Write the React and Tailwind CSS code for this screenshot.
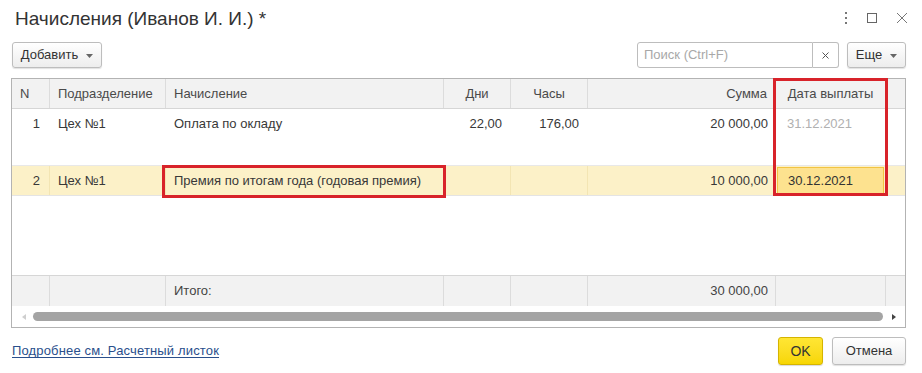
import React from "react";

const Caret = () => (
  <svg width="7" height="4" viewBox="0 0 7 4" className="ml-[8px] mt-[2px]">
    <path d="M0 0 L7 0 L3.5 4 Z" fill="#666" />
  </svg>
);

const cols = [
  "w-[38px]",
  "w-[116px]",
  "w-[278px]",
  "w-[67px]",
  "w-[77px]",
  "w-[188px]",
  "w-[110px]",
  "flex-1",
];

function Row({ cells, className, lineColor, cellClasses = [] }) {
  return (
    <div className={`flex ${className}`}>
      {cols.map((w, i) => (
        <div
          key={i}
          className={`${w} shrink-0 ${i < 7 ? "border-r" : ""} ${lineColor} ${cellClasses[i] || ""} flex`}
        >
          {cells[i]}
        </div>
      ))}
    </div>
  );
}

export default function App() {
  const hdr = "h-full w-full flex items-center text-[13px] text-[#4a4a4a]";
  const txt = "h-[30px] w-full flex items-center text-[13px] text-[#383838]";
  return (
    <div
      className="w-[922px] h-[373px] bg-white relative overflow-hidden"
      style={{ fontFamily: '"Liberation Sans", Arial, sans-serif' }}
    >
      {/* Title bar */}
      <div className="h-[42px] flex items-start justify-between pl-[15px] pr-[14px]">
        <div className="text-[19px] text-[#333] leading-none pt-[9px]">Начисления (Иванов И. И.) *</div>
        <div className="flex items-center gap-[18px] pt-[11px]">
          <svg width="4" height="14" viewBox="0 0 4 14">
            <rect x="1" y="1" width="2" height="2" fill="#777" />
            <rect x="1" y="6" width="2" height="2" fill="#777" />
            <rect x="1" y="11" width="2" height="2" fill="#777" />
          </svg>
          <svg width="12" height="12" viewBox="0 0 12 12">
            <rect x="1.5" y="1.5" width="9" height="9" fill="none" stroke="#666" strokeWidth="1" />
          </svg>
          <svg width="12" height="12" viewBox="0 0 12 12">
            <path d="M1 1 L11 11 M11 1 L1 11" stroke="#777" strokeWidth="1" />
          </svg>
        </div>
      </div>

      {/* Toolbar */}
      <div className="h-[26px] flex items-center pl-[12px] pr-[16px]">
        <button className="h-[26px] w-[90px] flex items-center justify-center rounded-[3px] border border-[#bdbdbd] bg-gradient-to-b from-white to-[#ededed] shadow-[0_1px_1px_rgba(0,0,0,0.12)] text-[13px] text-[#333]">
          Добавить
          <Caret />
        </button>
        <div className="flex-1" />
        <div className="flex h-[26px]">
          <div className="w-[176px] h-[26px] border border-[#bdbdbd] rounded-l-[3px] flex items-center pl-[6px] text-[13px] text-[#a8a8a8]">
            Поиск (Ctrl+F)
          </div>
          <div className="w-[26px] h-[26px] border border-l-0 border-[#bdbdbd] rounded-r-[3px] flex items-center justify-center">
            <svg width="7" height="7" viewBox="0 0 7 7">
              <path d="M0.5 0.5 L6.5 6.5 M6.5 0.5 L0.5 6.5" stroke="#555" strokeWidth="1" />
            </svg>
          </div>
        </div>
        <button className="ml-[8px] h-[26px] w-[59px] flex items-center justify-center rounded-[3px] border border-[#bdbdbd] bg-gradient-to-b from-white to-[#ededed] shadow-[0_1px_1px_rgba(0,0,0,0.12)] text-[13px] text-[#333]">
          Еще
          <Caret />
        </button>
      </div>

      {/* Table */}
      <div className="relative mt-[10px] ml-[11px] w-[895px] h-[250px] border border-[#b3b3b3] flex flex-col">
        {/* header */}
        <Row
          className="h-[30px] bg-[#f2f2f2] border-b border-[#d6d6d6]"
          lineColor="border-[#dcdcdc]"
          cells={[
            <div className={`${hdr} pl-[8px]`}>N</div>,
            <div className={`${hdr} pl-[8px]`}>Подразделение</div>,
            <div className={`${hdr} pl-[8px]`}>Начисление</div>,
            <div className={`${hdr} justify-center`}>Дни</div>,
            <div className={`${hdr} justify-center`}>Часы</div>,
            <div className={`${hdr} justify-end pr-[8px]`}>Сумма</div>,
            <div className={`${hdr} justify-center`}>Дата выплаты</div>,
            null,
          ]}
        />
        {/* row 1 */}
        <Row
          className="h-[57px] bg-white border-b border-[#e8e8e8]"
          lineColor="border-white"
          cells={[
            <div className={`${txt} justify-end pr-[9px]`}>1</div>,
            <div className={`${txt} pl-[8px]`}>Цех №1</div>,
            <div className={`${txt} pl-[8px]`}>Оплата по окладу</div>,
            <div className={`${txt} justify-end pr-[8px]`}>22,00</div>,
            <div className={`${txt} justify-end pr-[8px]`}>176,00</div>,
            <div className={`${txt} justify-end pr-[7px]`}>20 000,00</div>,
            <div className={`${txt} pl-[11px] text-[#b0b0b0]`}>31.12.2021</div>,
            null,
          ]}
        />
        {/* row 2 */}
        <Row
          className="h-[30px] bg-[#fcf1c8] border-b border-[#e4e4e4]"
          lineColor="border-[#f3e5b3]"
          cells={[
            <div className={`${txt} justify-end pr-[9px]`}>2</div>,
            <div className={`${txt} pl-[8px]`}>Цех №1</div>,
            <div className={`${txt} pl-[8px]`}>Премия по итогам года (годовая премия)</div>,
            <div className={`${txt}`}></div>,
            <div className={`${txt}`}></div>,
            <div className={`${txt} justify-end pr-[7px]`}>10 000,00</div>,
            <div className="w-full h-[30px] p-[1px]">
              <div className="w-full h-full bg-[#fde28f] border border-[#f2c443] flex items-center pl-[10px] text-[13px] text-[#333]">
                30.12.2021
              </div>
            </div>,
            null,
          ]}
        />
        <div className="flex-1" />
        {/* footer */}
        <Row
          className="h-[31px] bg-[#f2f2f2] border-t border-[#d6d6d6]"
          lineColor="border-[#dcdcdc]"
          cells={[
            null,
            null,
            <div className={`${hdr} pl-[8px] text-[#444]`}>Итого:</div>,
            null,
            null,
            <div className={`${hdr} justify-end pr-[7px] text-[#444]`}>30 000,00</div>,
            null,
            null,
          ]}
        />
        {/* scrollbar */}
        <div className="h-[21px] flex items-center bg-white">
          <div className="w-[21px] flex justify-center">
            <svg width="4" height="6" viewBox="0 0 4 6" className="ml-[2px]">
              <path d="M4 0 L0 3 L4 6 Z" fill="#cfcfcf" />
            </svg>
          </div>
          <div className="w-[850px] h-[9px] rounded-full bg-[#a4a4a4]" />
          <div className="flex-1 flex justify-center">
            <svg width="4" height="6" viewBox="0 0 4 6">
              <path d="M0 0 L4 3 L0 6 Z" fill="#444" />
            </svg>
          </div>
        </div>

        {/* red highlight boxes */}
        <div className="absolute left-[150px] top-[86px] w-[284px] h-[33px] border-[3px] border-[#d8232a]" />
        <div className="absolute left-[761px] top-[-1px] w-[115px] h-[118px] border-[3px] border-[#d8232a]" />
      </div>

      {/* Bottom */}
      <div className="mt-[9px] flex items-center pl-[12px] pr-[16px] h-[28px]">
        <a className="text-[13px] tracking-[0.15px] text-[#2a4f8c] underline underline-offset-[2px] decoration-[#2a4f8c]">
          Подробнее см. Расчетный листок
        </a>
        <div className="flex-1" />
        <button className="h-[28px] w-[45px] rounded-[3px] border border-[#d5b400] bg-gradient-to-b from-[#ffe633] to-[#f7d600] text-[14px] text-[#333] shadow-[0_1px_1px_rgba(0,0,0,0.15)]">
          OK
        </button>
        <button className="ml-[9px] h-[28px] w-[74px] rounded-[3px] border border-[#bdbdbd] bg-gradient-to-b from-white to-[#ededed] text-[13px] text-[#333] shadow-[0_1px_1px_rgba(0,0,0,0.12)]">
          Отмена
        </button>
      </div>
    </div>
  );
}
